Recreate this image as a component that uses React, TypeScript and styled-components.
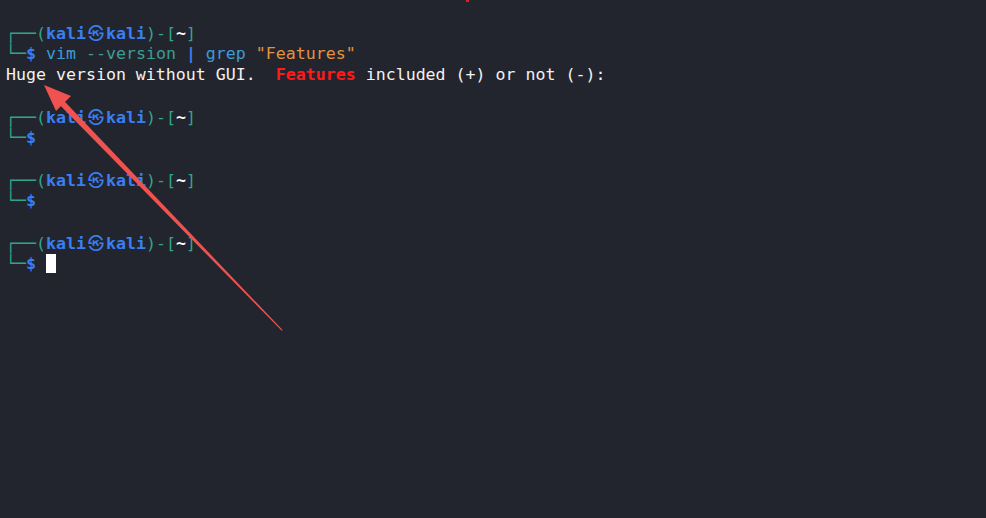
import React from "react";
import styled, { createGlobalStyle } from "styled-components";

const Global = createGlobalStyle`
  html, body { margin: 0; padding: 0; background: #23252e; }
  body { width: 986px; height: 518px; overflow: hidden; }
`;

const Screen = styled.div`
  position: relative;
  width: 986px;
  height: 518px;
  background: #23252e;
  box-sizing: border-box;
  padding: 22px 0 0 6px;
  font-family: "DejaVu Sans Mono", "Liberation Mono", monospace;
  font-size: 16.6px;
  line-height: 21px;
  color: #f2f2f2;
`;

const Line = styled.div`
  height: 21px;
  white-space: pre;
`;

const Seg = styled.span<{ $c: string; $b?: boolean }>`
  color: ${(p) => p.$c};
  font-weight: ${(p) => (p.$b ? 700 : 400)};
`;

const Mark = styled.span`
  display: inline-block;
  width: 20px;
  text-align: center;
  color: #3a7ff0;
  font-family: "Noto Sans CJK KR", "DejaVu Sans", sans-serif;
  font-weight: 700;
  font-size: 16px;
`;

const Cursor = styled.span`
  display: inline-block;
  width: 10px;
  height: 19px;
  background: #ffffff;
  vertical-align: -4px;
`;

const Overlay = styled.svg`
  position: absolute;
  left: 0;
  top: 0;
  pointer-events: none;
`;

const TEAL = "#31a48c";
const BLUE = "#3a7ff0";
const CMD = "#3d9ad8";
const ARG = "#3f9c93";
const STR = "#e39240";

const PromptTop = () => (
  <Line>
    <Seg $c={TEAL}>┌──(</Seg>
    <Seg $c={BLUE} $b>kali</Seg>
    <Mark>㉿</Mark>
    <Seg $c={BLUE} $b>kali</Seg>
    <Seg $c={TEAL}>)-[</Seg>
    <Seg $c="#ffffff" $b>~</Seg>
    <Seg $c={TEAL}>]</Seg>
  </Line>
);

const PromptBottom: React.FC<{ children?: React.ReactNode }> = ({ children }) => (
  <Line>
    <Seg $c={TEAL}>└─</Seg>
    <Seg $c={BLUE} $b>$</Seg>
    {children}
  </Line>
);

export default function App() {
  return (
    <>
      <Global />
      <Screen>
        <PromptTop />
        <PromptBottom>
          {" "}
          <Seg $c={CMD}>vim</Seg>
          <Seg $c={ARG}> --version </Seg>
          <Seg $c={BLUE} $b>|</Seg>
          <Seg $c={CMD}> grep </Seg>
          <Seg $c={STR}>"Features"</Seg>
        </PromptBottom>
        <Line>
          <Seg $c="#f2f2f2">Huge version without GUI.  </Seg>
          <Seg $c="#ff1a1a" $b>Features</Seg>
          <Seg $c="#f2f2f2"> included (+) or not (-):</Seg>
        </Line>
        <Line />
        <PromptTop />
        <PromptBottom />
        <Line />
        <PromptTop />
        <PromptBottom />
        <Line />
        <PromptTop />
        <PromptBottom>
          {" "}
          <Cursor />
        </PromptBottom>
        <Overlay width="986" height="518" viewBox="0 0 986 518">
          <rect x="466" y="0" width="3" height="2" fill="#e02020" />
          <polygon
            points="64.2,100.9 59.8,105.1 281.8,330.8 282.6,330.1"
            fill="#f0524f"
          />
          <polygon points="44,85 71,96 56,111" fill="#f0524f" />
        </Overlay>
      </Screen>
    </>
  );
}
